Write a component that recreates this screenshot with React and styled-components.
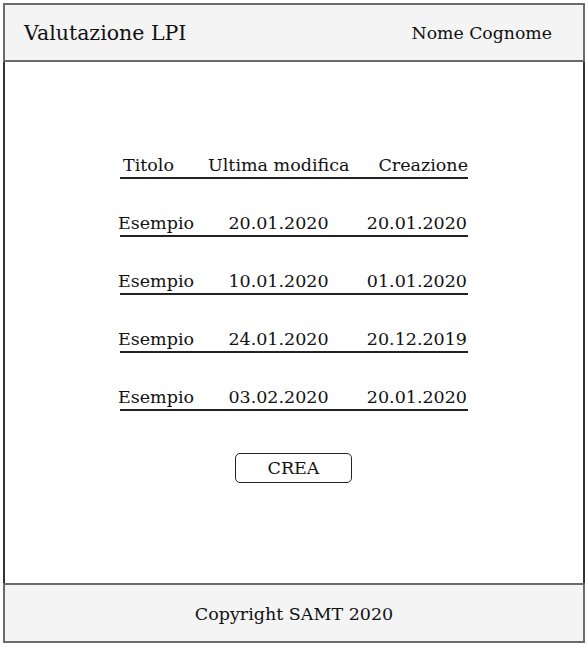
import React from 'react';
import styled, { createGlobalStyle } from 'styled-components';

const GlobalStyle = createGlobalStyle`
  body {
    margin: 0;
    background: #ffffff;
    font-family: "DejaVu Serif", "Liberation Serif", serif;
    color: #111111;
  }
`;

const Frame = styled.div`
  margin: 3px;
  width: 582px;
  display: flex;
  flex-direction: column;
`;

const Header = styled.header`
  box-sizing: border-box;
  height: 59px;
  border: 2px solid #6b6b6b;
  background: #f4f4f4;
  display: flex;
  align-items: center;
  justify-content: space-between;
  padding: 1px 31px 0 19px;
`;

const Title = styled.h1`
  margin: 0;
  font-size: 20.5px;
  font-weight: normal;
`;

const User = styled.span`
  font-size: 17.3px;
`;

const Main = styled.main`
  box-sizing: border-box;
  height: 521px;
  border-left: 2px solid #333333;
  border-right: 2px solid #333333;
  background: #ffffff;
  display: flex;
  flex-direction: column;
  align-items: center;
  padding-top: 59px;
`;

const Table = styled.div`
  width: 348px;
  display: flex;
  flex-direction: column;
`;

const Row = styled.div`
  box-sizing: border-box;
  height: 58px;
  display: grid;
  grid-template-columns: 90px 138px 120px;
  align-items: end;
  padding-bottom: 2px;
  border-bottom: 2px solid #222222;
  font-size: 17.5px;
  line-height: 20px;
`;

const Cell = styled.div`
  text-align: ${(p) => p.$align || 'left'};
  white-space: nowrap;
  margin-left: ${(p) => p.$shift || 0}px;
  margin-right: ${(p) => p.$pull || 0}px;
`;

const CreateButton = styled.button`
  margin: 42px 0 0 -1px;
  width: 117px;
  height: 30px;
  box-sizing: border-box;
  border: 1.5px solid #222222;
  border-radius: 5px;
  background: #ffffff;
  font-family: inherit;
  font-size: 17.5px;
  color: #111111;
  padding: 0;
  cursor: pointer;
`;

const Footer = styled.footer`
  box-sizing: border-box;
  height: 60px;
  border: 2px solid #6b6b6b;
  background: #f4f4f4;
  display: flex;
  align-items: center;
  justify-content: center;
  font-size: 17.5px;
  padding-top: 1px;
`;

const rows = [
  ['Esempio', '20.01.2020', '20.01.2020'],
  ['Esempio', '10.01.2020', '01.01.2020'],
  ['Esempio', '24.01.2020', '20.12.2019'],
  ['Esempio', '03.02.2020', '20.01.2020'],
];

export default function App() {
  return (
    <>
      <GlobalStyle />
      <Frame>
        <Header>
          <Title>Valutazione LPI</Title>
          <User>Nome Cognome</User>
        </Header>
        <Main>
          <Table>
            <Row>
              <Cell $shift={3}>Titolo</Cell>
              <Cell $align="center" $shift={-2}>Ultima modifica</Cell>
              <Cell $align="right">Creazione</Cell>
            </Row>
            {rows.map((r, i) => (
              <Row key={i}>
                <Cell $shift={-2}>{r[0]}</Cell>
                <Cell $align="center" $shift={-1}>{r[1]}</Cell>
                <Cell $align="right" $pull={1}>{r[2]}</Cell>
              </Row>
            ))}
          </Table>
          <CreateButton>CREA</CreateButton>
        </Main>
        <Footer>Copyright SAMT 2020</Footer>
      </Frame>
    </>
  );
}
